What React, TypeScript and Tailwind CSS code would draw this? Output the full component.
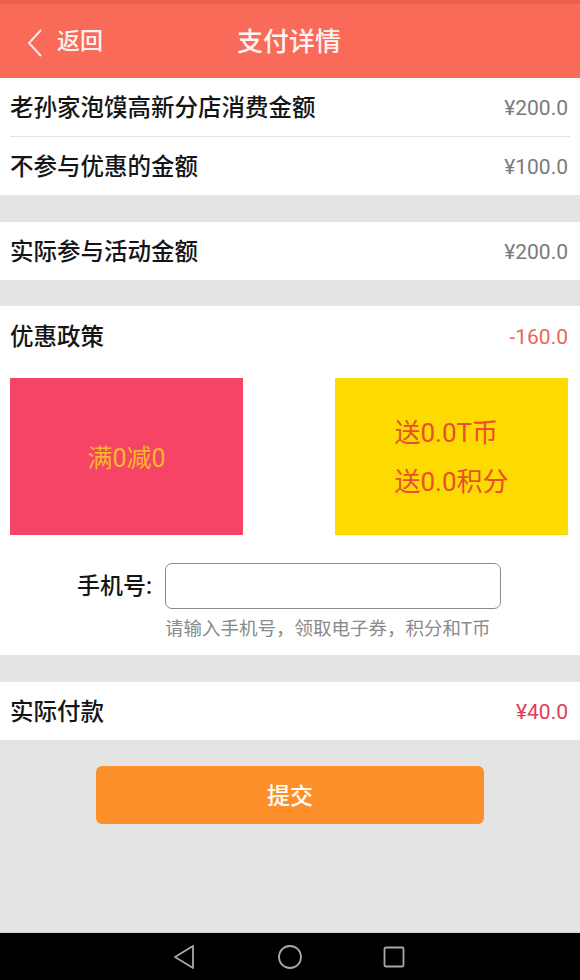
import { type ReactNode } from "react";

const font = { fontFamily: 'Roboto, "Noto Sans CJK SC", sans-serif' };

type RowProps = {
  label: string;
  value: ReactNode;
  valueClass?: string;
  divider?: boolean;
};

const Row = ({ label, value, valueClass = "text-[#7a7a7a]", divider }: RowProps) => (
  <div className="px-[10px] bg-white">
    <div
      className={`flex items-center justify-between pr-[2px] pt-[3px] ${divider ? "h-[59px] border-b border-[#e3e3e3]" : "h-[58px]"}`}
    >
      <span className="text-[23.5px] font-medium text-[#151515]">{label}</span>
      <span className={`text-[21px] ${valueClass}`}>{value}</span>
    </div>
  </div>
);

const Gap = ({ h = "h-[27px]" }: { h?: string }) => <div className={`${h} bg-[#e4e4e4]`} />;

export default function App() {
  return (
    <div className="w-[580px] h-[980px] flex flex-col bg-[#e4e4e4]" style={font}>
      {/* header */}
      <div className="h-[4px] bg-[#ec5e4d]" />
      <header className="h-[74px] bg-[#fa6a58] flex items-center relative pt-[3px]">
        <div className="flex items-center pl-[26px] gap-[13px] text-white">
          <svg width="18" height="30" viewBox="0 0 18 30" fill="none">
            <path d="M15 2 L3 15 L15 28" stroke="#fbe9e4" strokeWidth="2" />
          </svg>
          <span className="text-[23px] font-medium text-[#fff3ef]">返回</span>
        </div>
        <h1 className="absolute left-[237px] text-[26px] font-medium text-[#fff5f2]">支付详情</h1>
      </header>

      <Row label="老孙家泡馍高新分店消费金额" value="¥200.0" divider />
      <Row label="不参与优惠的金额" value="¥100.0" />
      <Gap />
      <Row label="实际参与活动金额" value="¥200.0" />
      <Gap h="h-[26px]" />

      {/* discount policy */}
      <section className="bg-white h-[349px] flex flex-col">
        <div className="h-[60px] px-[10px] pr-[12px] pt-[3px] flex items-center justify-between">
          <span className="text-[23.5px] font-medium text-[#151515]">优惠政策</span>
          <span className="text-[21px] text-[#e8685a]">-160.0</span>
        </div>
        <div className="flex justify-between pl-[10px] pr-[12px] mt-[12px]">
          <div className="w-[233px] h-[157px] bg-[#f54465] flex items-center justify-center">
            <span className="text-[25px] text-[#f9b72a] mt-[4px]">满0减0</span>
          </div>
          <div className="w-[233px] h-[157px] bg-[#fddb00] flex items-center justify-center">
            <div className="flex flex-col items-start gap-[9px] mt-[2px]">
              <span className="text-[26px] text-[#ea4e2d] leading-[40px]">送0.0T币</span>
              <span className="text-[26px] text-[#ea4e2d] leading-[40px]">送0.0积分</span>
            </div>
          </div>
        </div>
        <div className="flex items-center mt-[28px]">
          <span className="w-[152px] text-right text-[23px] font-medium text-[#151515] pt-[2px]">手机号:</span>
          <div className="ml-[13px] w-[336px] h-[46px] rounded-[7px] border border-[#8a8a8a] bg-white" />
        </div>
        <p className="ml-[165px] mt-[7px] text-[18.5px] text-[#8a8a8a]">请输入手机号，领取电子券，积分和T币</p>
      </section>

      <Gap />
      <Row label="实际付款" value="¥40.0" valueClass="text-[#e43a5a]" />

      {/* submit */}
      <div className="flex-1 bg-[#e4e4e4] flex flex-col items-center pt-[26px]">
        <button className="w-[388px] h-[58px] rounded-[6px] bg-[#fd902a] text-white text-[23px] font-medium pt-[4px]">
          提交
        </button>
      </div>

      {/* android nav */}
      <div className="h-[1px] bg-[#d0d0d0]" />
      <nav className="h-[47px] bg-black flex items-center">
        <svg className="ml-[172px]" width="24" height="26" viewBox="0 0 24 26" fill="none">
          <path d="M21 2 L3 13 L21 24 Z" stroke="#a8a8a8" strokeWidth="1.8" strokeLinejoin="round" />
        </svg>
        <svg className="ml-[81px]" width="26" height="26" viewBox="0 0 26 26" fill="none">
          <circle cx="13" cy="13" r="11" stroke="#a8a8a8" strokeWidth="1.8" />
        </svg>
        <svg className="ml-[80px]" width="22" height="22" viewBox="0 0 22 22" fill="none">
          <rect x="1.5" y="1.5" width="19" height="19" rx="1.5" stroke="#a8a8a8" strokeWidth="1.8" />
        </svg>
      </nav>
    </div>
  );
}
